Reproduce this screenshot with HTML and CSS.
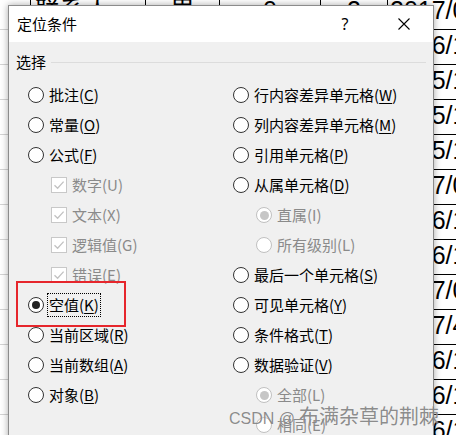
FILE: index.html
```html
<!DOCTYPE html>
<html lang="zh-CN">
<head>
<meta charset="utf-8">
<title>定位条件</title>
<link rel="stylesheet" href="styles.css">
</head>
<body>
<div class="sheet">
  <div class="cell a"></div><div class="cell">联系人</div><div class="cell center">男</div><div class="cell center">0</div><div class="cell center">2</div><div class="cell last">2017/07/05</div>
  <div class="cell a"></div><div class="cell"></div><div class="cell"></div><div class="cell"></div><div class="cell"></div><div class="cell last">2016/10/12</div>
  <div class="cell a"></div><div class="cell"></div><div class="cell"></div><div class="cell"></div><div class="cell"></div><div class="cell last">2015/10/11</div>
  <div class="cell a"></div><div class="cell"></div><div class="cell"></div><div class="cell"></div><div class="cell"></div><div class="cell last">2015/11/03</div>
  <div class="cell a"></div><div class="cell"></div><div class="cell"></div><div class="cell"></div><div class="cell"></div><div class="cell last">2015/12/01</div>
  <div class="cell a"></div><div class="cell"></div><div class="cell"></div><div class="cell"></div><div class="cell"></div><div class="cell last">2017/07/02</div>
  <div class="cell a"></div><div class="cell"></div><div class="cell"></div><div class="cell"></div><div class="cell"></div><div class="cell last">2016/11/20</div>
  <div class="cell a"></div><div class="cell"></div><div class="cell"></div><div class="cell"></div><div class="cell"></div><div class="cell last">2016/12/09</div>
  <div class="cell a"></div><div class="cell"></div><div class="cell"></div><div class="cell"></div><div class="cell"></div><div class="cell last">2017/07/01</div>
  <div class="cell a"></div><div class="cell"></div><div class="cell"></div><div class="cell"></div><div class="cell"></div><div class="cell last">2017/4/18</div>
  <div class="cell a"></div><div class="cell"></div><div class="cell"></div><div class="cell"></div><div class="cell"></div><div class="cell last">2016/10/07</div>
  <div class="cell a"></div><div class="cell"></div><div class="cell"></div><div class="cell"></div><div class="cell"></div><div class="cell last">2016/11/15</div>
  <div class="cell a"></div><div class="cell"></div><div class="cell"></div><div class="cell"></div><div class="cell"></div><div class="cell last">2016/12/30</div>
</div>

<div class="dialog">
  <div class="titlebar">
    <div class="title">定位条件</div>
    <div class="help">?</div>
    <div class="close">
      <svg width="12" height="12" viewBox="0 0 12 12"><path d="M0.5 0.5 L11.5 11.5 M11.5 0.5 L0.5 11.5" stroke="#000" stroke-width="1.1" fill="none"/></svg>
    </div>
  </div>
  <div class="body">
    <div class="legend"><span>选择</span><span class="rule"></span></div>
    <div class="options">
      <div class="col">
        <div class="opt"><span class="radio"></span><span>批注(<u>C</u>)</span></div>
        <div class="opt"><span class="radio"></span><span>常量(<u>O</u>)</span></div>
        <div class="opt"><span class="radio"></span><span>公式(<u>F</u>)</span></div>
        <div class="opt sub dis"><span class="check"><svg width="14" height="14" viewBox="0 0 14 14"><path d="M2.5 7.2 L5.6 10.2 L11.6 3.6" stroke="#c2c2c2" stroke-width="1.3" fill="none"/></svg></span><span>数字(U)</span></div>
        <div class="opt sub dis"><span class="check"><svg width="14" height="14" viewBox="0 0 14 14"><path d="M2.5 7.2 L5.6 10.2 L11.6 3.6" stroke="#c2c2c2" stroke-width="1.3" fill="none"/></svg></span><span>文本(X)</span></div>
        <div class="opt sub dis"><span class="check"><svg width="14" height="14" viewBox="0 0 14 14"><path d="M2.5 7.2 L5.6 10.2 L11.6 3.6" stroke="#c2c2c2" stroke-width="1.3" fill="none"/></svg></span><span>逻辑值(G)</span></div>
        <div class="opt sub dis"><span class="check"><svg width="14" height="14" viewBox="0 0 14 14"><path d="M2.5 7.2 L5.6 10.2 L11.6 3.6" stroke="#c2c2c2" stroke-width="1.3" fill="none"/></svg></span><span>错误(E)</span></div>
        <div class="opt"><span class="radio on"></span><span class="focus">空值(<u>K</u>)</span></div>
        <div class="opt"><span class="radio"></span><span>当前区域(<u>R</u>)</span></div>
        <div class="opt"><span class="radio"></span><span>当前数组(<u>A</u>)</span></div>
        <div class="opt"><span class="radio"></span><span>对象(<u>B</u>)</span></div>
      </div>
      <div class="col">
        <div class="opt"><span class="radio"></span><span>行内容差异单元格(<u>W</u>)</span></div>
        <div class="opt"><span class="radio"></span><span>列内容差异单元格(<u>M</u>)</span></div>
        <div class="opt"><span class="radio"></span><span>引用单元格(<u>P</u>)</span></div>
        <div class="opt"><span class="radio"></span><span>从属单元格(<u>D</u>)</span></div>
        <div class="opt sub dis"><span class="radio dis on"></span><span>直属(I)</span></div>
        <div class="opt sub dis"><span class="radio dis"></span><span>所有级别(L)</span></div>
        <div class="opt"><span class="radio"></span><span>最后一个单元格(<u>S</u>)</span></div>
        <div class="opt"><span class="radio"></span><span>可见单元格(<u>Y</u>)</span></div>
        <div class="opt"><span class="radio"></span><span>条件格式(<u>T</u>)</span></div>
        <div class="opt"><span class="radio"></span><span>数据验证(<u>V</u>)</span></div>
        <div class="opt sub dis"><span class="radio dis on"></span><span>全部(L)</span></div>
        <div class="opt sub dis"><span class="radio dis"></span><span>相同(E)</span></div>
      </div>
    </div>
  </div>
  <div class="highlight"></div>
</div>

<div class="watermark"><span class="wm-latin">CSDN @</span>布满杂草的荆棘</div>
</body>
</html>
```

FILE: styles.css
```css
* { box-sizing: border-box; }
html, body { margin: 0; padding: 0; }
body {
  width: 456px;
  height: 435px;
  overflow: hidden;
  position: relative;
  background: #fff;
  font-family: "Noto Sans CJK SC", "Noto Sans", sans-serif;
}

/* spreadsheet behind the dialog */
.sheet {
  display: grid;
  grid-template-columns: 31px 115px 74px 101px 67px 68px;
  grid-auto-rows: 35px;
  margin-top: -5px;
  font-family: "Liberation Sans", "Noto Sans CJK SC", sans-serif;
  font-size: 25px;
  color: #000;
}
.cell {
  border-right: 1px solid #000;
  border-bottom: 1px solid #000;
  overflow: hidden;
  white-space: nowrap;
  display: flex;
  align-items: center;
  padding: 0 0 4px 4px;
  line-height: 30px;
}
.cell.a { border-bottom-color: #d4d4d4; }
.cell.center { justify-content: center; padding-left: 0; }
.cell.last { border-right: none; padding-left: 2px; }

/* dialog window */
.dialog {
  position: absolute;
  left: 8px;
  top: 5px;
  width: 426px;
  height: 445px;
  border: 1px solid #8c8c8c;
  background: #f0f0f0;
  box-shadow: 0 0 7px rgba(0, 0, 0, 0.35);
  color: #000;
}
.titlebar {
  height: 36px;
  background: #fff;
  display: flex;
  align-items: center;
  padding-left: 8px;
}
.title { flex: 1; font-size: 15px; line-height: 20px; }
.help {
  width: 40px;
  text-align: center;
  font-family: "Noto Sans", sans-serif;
  font-size: 16px;
  line-height: 20px;
  margin-top: -1px;
}
.close {
  width: 46px;
  margin-left: 16px;
  margin-right: 6px;
  display: flex;
  justify-content: center;
  margin-top: -1px;
}
.close svg { display: block; }

.body { padding: 10px 7px 0 7px; }
.legend {
  display: flex;
  align-items: center;
  gap: 5px;
  height: 20px;
  font-size: 15px;
  line-height: 20px;
}
.legend .rule { flex: 1; height: 1px; background: #dcdcdc; }

.options {
  display: grid;
  grid-template-columns: 205px 1fr;
  margin-top: 8px;
  padding-left: 12px;
}
.col { display: flex; flex-direction: column; }
.opt {
  height: 30px;
  display: flex;
  align-items: center;
  gap: 5px;
  font-size: 15px;
  line-height: 20px;
  white-space: nowrap;
}
.opt.sub { padding-left: 23px; }
.opt.dis { color: #8a8a8a; }
.opt u { text-underline-offset: 2px; }

.radio {
  width: 16px;
  height: 16px;
  border: 1px solid #333;
  border-radius: 50%;
  background: #fff;
  flex: none;
  display: flex;
  align-items: center;
  justify-content: center;
}
.radio.on::after {
  content: "";
  width: 8px;
  height: 8px;
  border-radius: 50%;
  background: #222;
}
.radio.dis { border-color: #c0c0c0; }
.radio.dis.on::after { background: #c6c6c6; width: 9px; height: 9px; }

.check {
  width: 16px;
  height: 16px;
  border: 1px solid #c8c8c8;
  background: #fff;
  flex: none;
  display: flex;
  align-items: center;
  justify-content: center;
}
.check svg { display: block; }

.focus { outline: 1px dotted #000; outline-offset: 1px; }

.highlight {
  position: absolute;
  left: 7px;
  top: 275px;
  width: 110px;
  height: 46px;
  border: 2px solid #e6262c;
}

.watermark {
  position: absolute;
  left: 229px;
  top: 403px;
  font-size: 20px;
  line-height: 26px;
  color: rgba(110, 110, 110, 0.8);
  white-space: nowrap;
  text-shadow: 0 0 1px rgba(255, 255, 255, 0.7);
}
.wm-latin {
  font-family: "Liberation Sans", sans-serif;
  font-size: 16px;
  margin-right: 4px;
}
```
